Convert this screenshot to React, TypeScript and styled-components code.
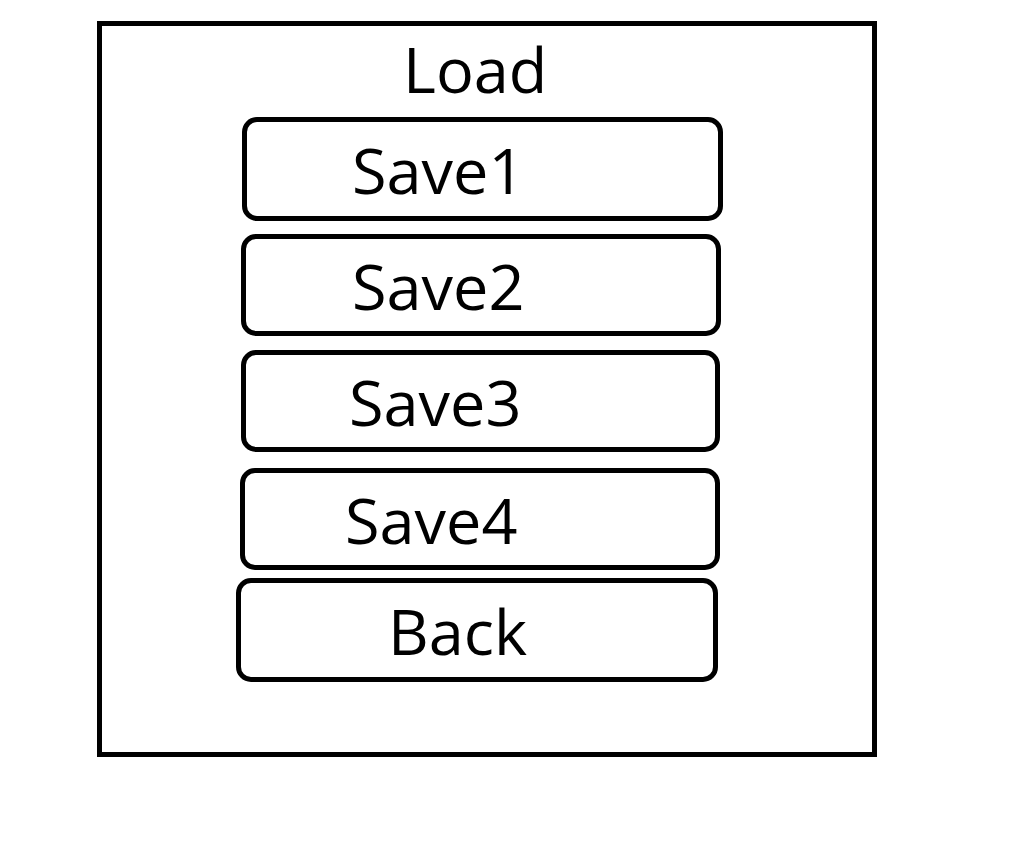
import React from "react";
import styled, {createGlobalStyle} from "styled-components";

const GlobalStyle = createGlobalStyle`
  body {
    margin: 0;
    background: #fff;
    font-family: "Open Sans", "Liberation Sans", sans-serif;
    color: #000;
  }
`

const Frame = styled.div`
  box-sizing: border-box;
  margin: 21px 0 0 97px;
  width: 780px;
  height: 736px;
  border: 5px solid #000;
  display: flex;
  flex-direction: column;
`

const Title = styled.div`
  height: 91px;
  padding-left: 301px;
  font-size: 63px;
  line-height: 86px;
`

const SlotButton = styled.div<{ $left: number, $width: number, $height: number, $gap: number, $indent: number }>`
  box-sizing: border-box;
  margin-top: ${props => props.$gap}px;
  margin-left: ${props => props.$left}px;
  width: ${props => props.$width}px;
  height: ${props => props.$height}px;
  border: 5px solid #000;
  border-radius: 15px;
  display: flex;
  align-items: center;
  padding-left: ${props => props.$indent}px;
  font-size: 63px;
  line-height: 1;
  cursor: pointer;
`

type Slot = { label: string, left: number, width: number, height: number, gap: number, indent: number }

const slots: Slot[] = [
  {label: 'Save1', left: 140, width: 481, height: 104, gap: 0, indent: 105},
  {label: 'Save2', left: 139, width: 480, height: 102, gap: 13, indent: 106},
  {label: 'Save3', left: 139, width: 479, height: 102, gap: 14, indent: 103},
  {label: 'Save4', left: 138, width: 480, height: 102, gap: 16, indent: 100},
  {label: 'Back', left: 134, width: 482, height: 104, gap: 8, indent: 147},
]

export default function App() {
  return (
    <>
      <GlobalStyle/>
      <Frame>
        <Title>Load</Title>
        {slots.map(slot => (
          <SlotButton key={slot.label} $left={slot.left} $width={slot.width} $height={slot.height}
                      $gap={slot.gap} $indent={slot.indent}>
            {slot.label}
          </SlotButton>
        ))}
      </Frame>
    </>
  );
}
